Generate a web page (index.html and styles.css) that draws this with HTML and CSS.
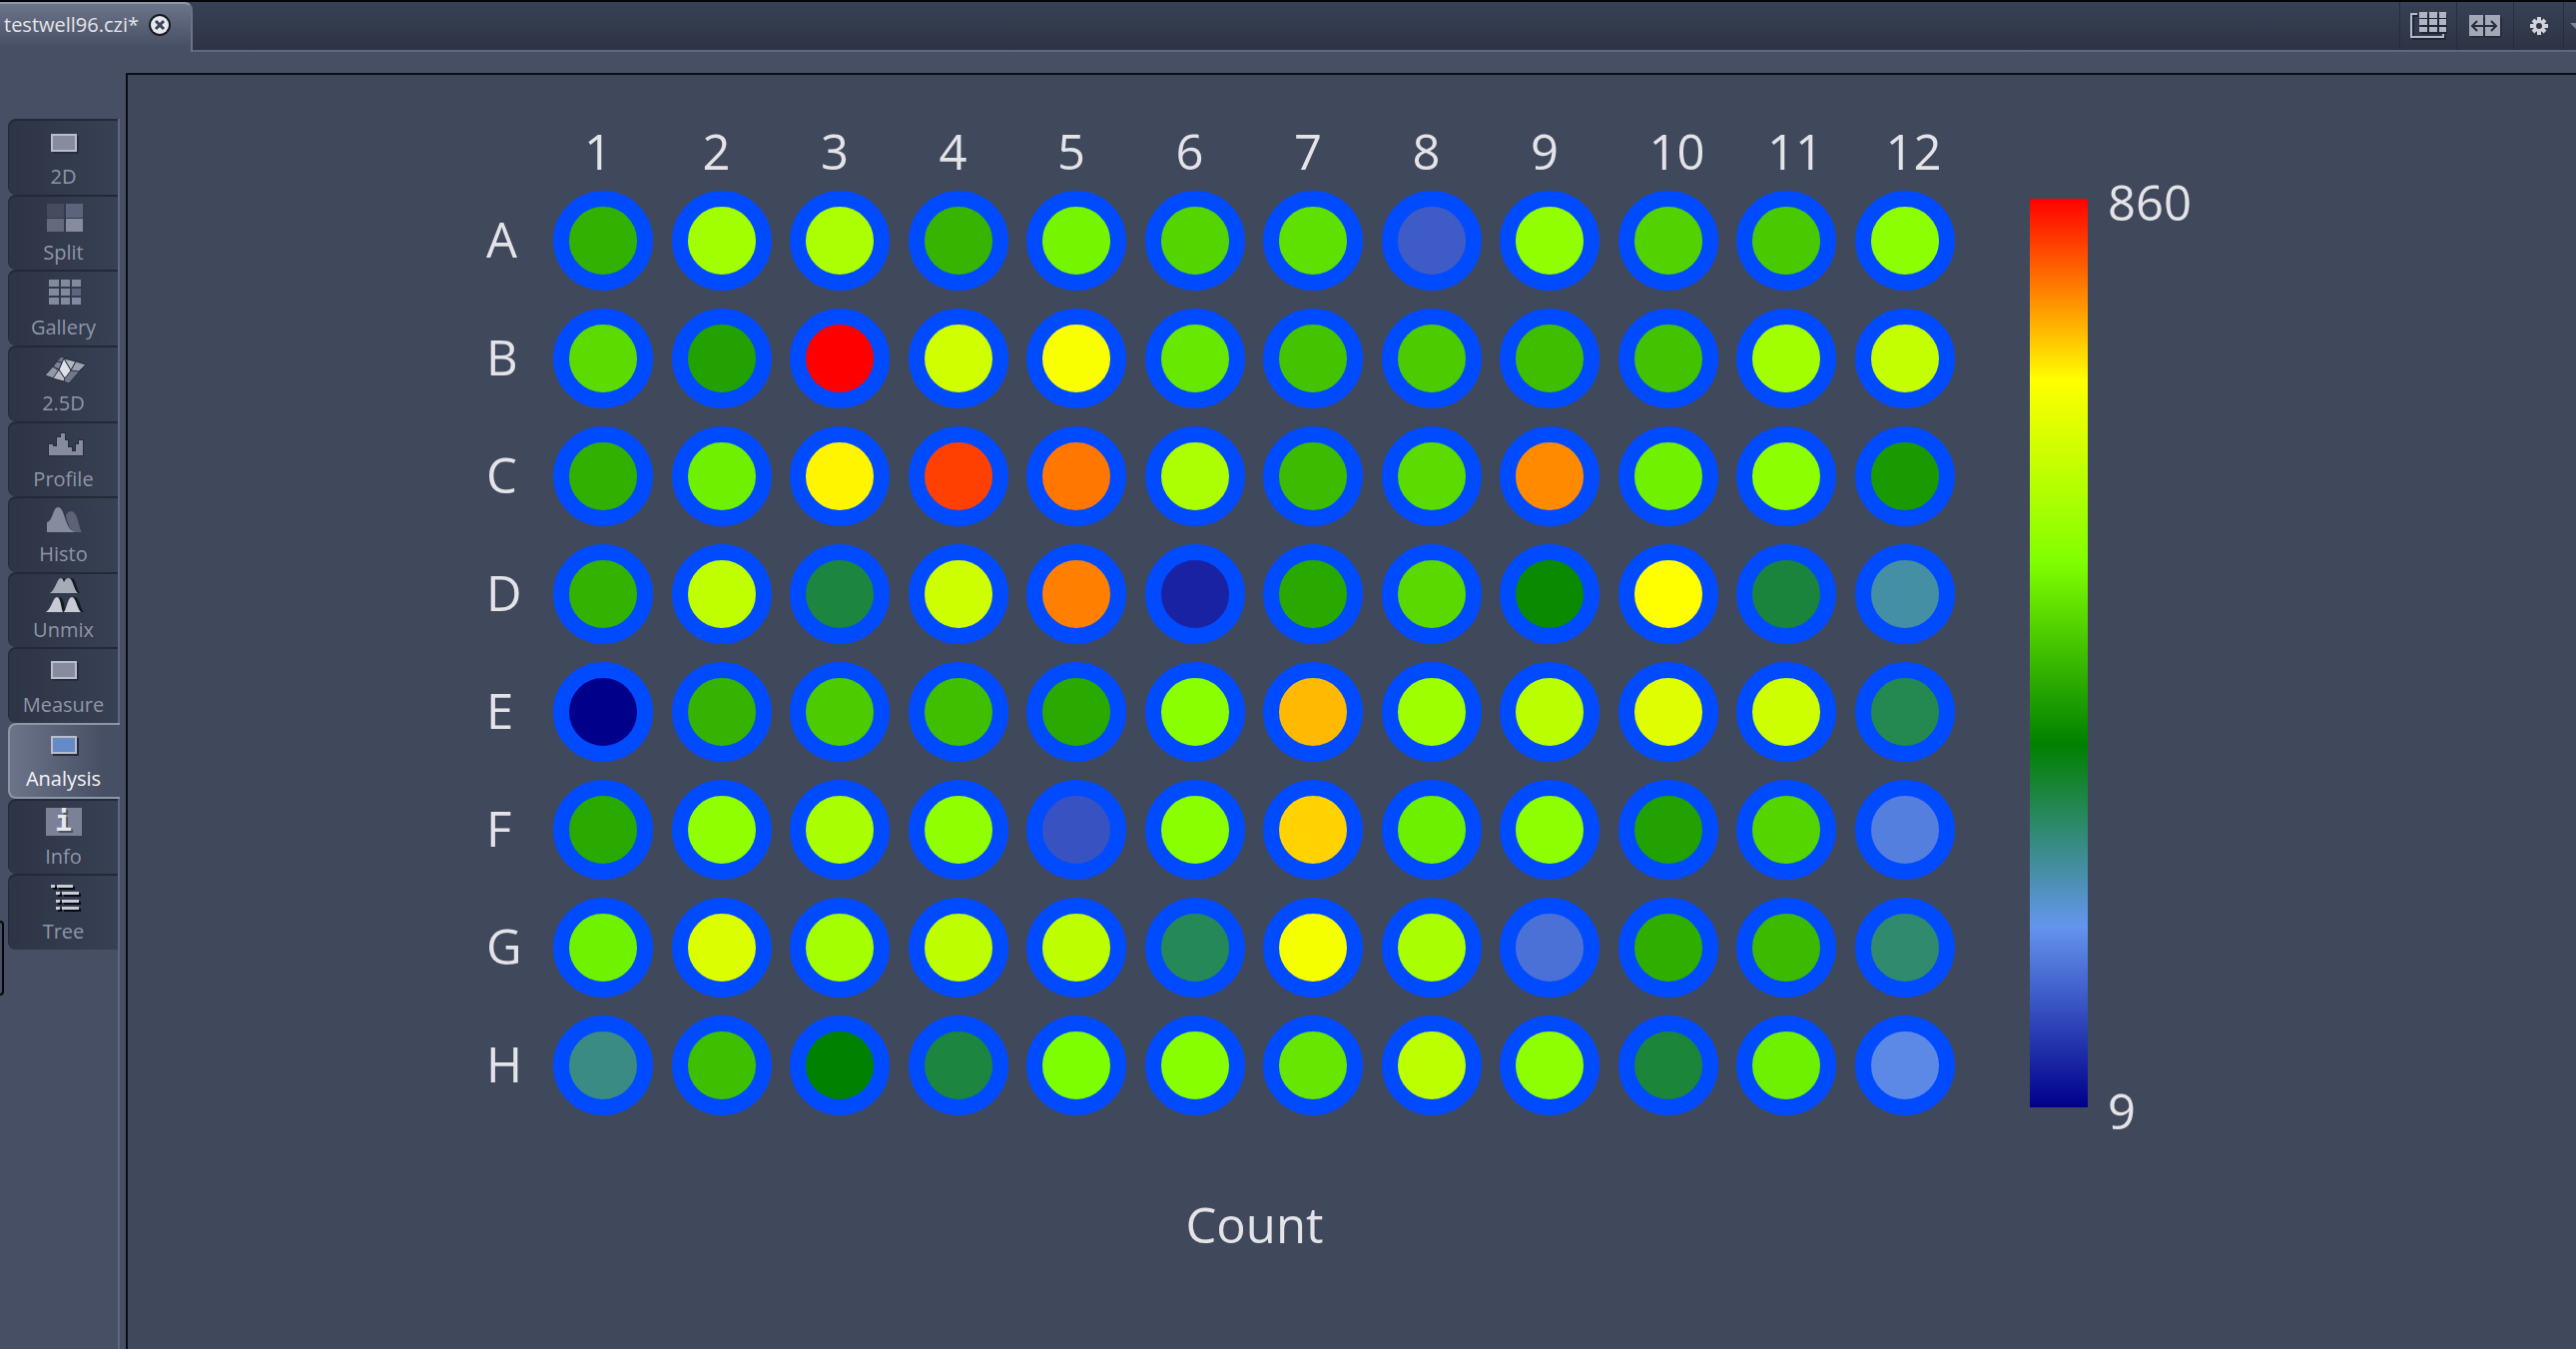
FILE: index.html
```html
<!DOCTYPE html>
<html lang="en">
<head>
<meta charset="utf-8">
<title>testwell96.czi</title>
<link rel="stylesheet" href="styles.css">
</head>
<body>
<header class="topbar">
  <div class="doc-tab">
    <span class="doc-name">testwell96.czi*</span>
    <button class="close" type="button" aria-label="Close document">
      <svg width="24" height="24" viewBox="0 0 24 24"><circle cx="12" cy="12" r="11" fill="#151a24"/><circle cx="12" cy="12" r="9" fill="#e6e8ee"/><path d="M8 8l8 8M16 8l-8 8" stroke="#3a4256" stroke-width="3"/></svg>
    </button>
  </div>
  <div class="tools">
    <button class="tool tool-wide" type="button" aria-label="Gallery layout">
      <svg width="38" height="30" viewBox="0 0 38 30">
        <path d="M9 5H4v23h32v-4" fill="none" stroke="#1f2635" stroke-width="2"/>
        <path d="M8 3H2v23h32v-3" fill="none" stroke="#b4b9c6" stroke-width="2"/>
        <path d="M12 3h26v20H12z" fill="#1f2635"/>
        <g fill="#b0b5c4"><path d="M10 1h8v6h-8zM20 1h8v6h-8zM30 1h7v6h-7zM10 8h8v6h-8zM20 8h8v6h-8zM30 8h7v6h-7zM10 16h8v5h-8zM20 16h8v5h-8zM30 16h7v5h-7z"/></g>
      </svg>
    </button>
    <button class="tool tool-wide" type="button" aria-label="Split layout">
      <svg width="34" height="24" viewBox="0 0 34 24">
        <path d="M3 3h31v21H3z" fill="#262d3c"/>
        <path d="M1 1h14v21H1zM17 1h15v21H17z" fill="#a3a8b7"/>
        <path d="M5 12h23M9 7l-5 5 5 5M23 7l5 5-5 5" fill="none" stroke="#262d3c" stroke-width="2"/>
      </svg>
    </button>
    <button class="tool tool-gear" type="button" aria-label="Settings">
      <svg width="20" height="20" viewBox="0 0 20 20">
        <path d="M10 1v18M1 10h18M4 4l12 12M16 4L4 16" stroke="#d0d3dc" stroke-width="4"/>
        <circle cx="10" cy="10" r="6" fill="#d0d3dc"/><circle cx="10" cy="10" r="3" fill="#2f3648"/>
      </svg>
    </button>
    <button class="tool tool-menu" type="button" aria-label="More">
      <svg width="12" height="6" viewBox="0 0 12 6"><path d="M0 0h12L6 6z" fill="#7c849a"/></svg>
    </button>
  </div>
</header>
<main class="workspace">
  <span class="handle"></span>
  <nav class="sidebar">
    <div class="views">
      <button class="view" type="button">
        <svg class="icon" viewBox="0 0 44 36"><path d="M11 12h26v18H11z" fill="#262d3c"/><path d="M10 11h24v16H10z" fill="#878b9e" stroke="#b9bdca" stroke-width="2"/></svg>
        <span>2D</span>
      </button>
      <button class="view" type="button">
        <svg class="icon" viewBox="0 0 44 36"><path d="M5 4h17v14H5z" fill="#454c5f"/><path d="M24 4h17v14H24z" fill="#5c647b"/><path d="M5 19h17v13H5z" fill="#646a7c"/><path d="M24 19h17v13H24z" fill="#868b9e"/></svg>
        <span>Split</span>
      </button>
      <button class="view" type="button">
        <svg class="icon" viewBox="0 0 44 36"><path d="M7 5h10v7H7zM19 5h9v7h-9zM30 5h9v7h-9zM7 14h10v7H7zM19 14h9v7h-9zM7 23h10v7H7zM19 23h9v7h-9zM30 23h9v7h-9z" fill="#828aa0"/><path d="M30 14h9v7h-9z" fill="#5e6480"/></svg>
        <span>Gallery</span>
      </button>
      <button class="view" type="button">
        <svg class="icon" viewBox="0 0 44 36">
          <g stroke="#262d3c" stroke-width="1">
            <path d="M19 6l25 8-17 19L3 25z" fill="#6f778b"/>
            <path d="M3 25l8-9 6 4-5 8z" fill="#9298a8"/>
            <path d="M22 8l12 3-5 9z" fill="#b4b8c4"/>
            <path d="M34 11l10 3-7 7-8-1z" fill="#9ca1b0"/>
            <path d="M11 28l6-9 6 9-1 3z" fill="#b9bdc9"/>
            <path d="M22 8l7 12-6 8-6-9z" fill="#dfe1e8"/>
            <path d="M11 16l4-5 5 1-3 7z" fill="#7b8397"/>
          </g>
        </svg>
        <span>2.5D</span>
      </button>
      <button class="view" type="button">
        <svg class="icon" viewBox="0 0 44 36"><path d="M7 29V18h4v2h4v-9h4V7h4v7h3v7h4v4h4v-7h3v-4h4v15z" fill="#868b9e" stroke="#262d3c" stroke-width="2" paint-order="stroke"/></svg>
        <span>Profile</span>
      </button>
      <button class="view" type="button">
        <svg class="icon" viewBox="0 0 44 36"><path d="M24 14c3-5 8-6 11 2s2 11 5 15h-8c-4-3-7-10-8-17z" fill="#5c6277"/><path d="M5 31V21c6-1 6-15 11-15s6 9 9 16c2 5 4 7 8 9z" fill="#868b9e"/></svg>
        <span>Histo</span>
      </button>
      <button class="view" type="button">
        <svg class="icon" viewBox="0 0 44 36">
          <path d="M11 16C17 12 17 1 21 1c2 0 3 2 4 4 1-2 2-4 5-4 4 0 5 12 8 15zM9 35c5-4 5-15 9-15s4 10 6 14c2-5 4-14 9-14s5 11 9 15z" fill="#151a24"/>
          <path d="M8 16C14 12 15 1 19 1c2 0 2 2 3 4 1-2 2-4 5-4 4 0 5 12 9 15z" fill="#a6abb8"/>
          <path d="M4 35c6-4 7-15 11-15s4 11 6 15zM22 35c3-4 4-15 8-15s5 11 9 15z" fill="#c8cbd5"/>
        </svg>
        <span>Unmix</span>
      </button>
      <button class="view" type="button">
        <svg class="icon" viewBox="0 0 44 36"><path d="M11 11h26v18H11z" fill="#262d3c"/><path d="M10 10h24v16H10z" fill="#878b9e" stroke="#b9bdca" stroke-width="2"/></svg>
        <span>Measure</span>
      </button>
      <button class="view active" type="button" aria-current="page">
        <svg class="icon" viewBox="0 0 44 36"><path d="M11 12h26v18H11z" fill="#262d3c"/><path d="M10 11h24v16H10z" fill="#648ac8" stroke="#b9bdca" stroke-width="2"/></svg>
        <span>Analysis</span>
      </button>
      <button class="view" type="button">
        <span class="info">i</span>
        <span>Info</span>
      </button>
      <button class="view" type="button">
        <svg class="icon" viewBox="0 0 44 36"><path d="M11 8h4v3h-4zM17 8h16v3H17zM16 15h4v3h-4zM22 15h17v3H22zM16 23h4v3h-4zM22 23h17v3H22zM16 30h4v3h-4zM22 30h17v3H22z" fill="#080a10"/><path d="M9 6h4v3H9zM15 6h16v3H15zM14 13h4v3h-4zM20 13h17v3H20zM14 21h4v3h-4zM20 21h17v3H20zM14 28h4v3h-4zM20 28h17v3H20z" fill="#c8cbd5"/></svg>
        <span>Tree</span>
      </button>
    </div>
  </nav>
  <section class="panel">
    <figure class="heatmap">
      <table class="plate">
        <thead>
          <tr><td class="corner"></td><th scope="col">1</th><th scope="col">2</th><th scope="col">3</th><th scope="col">4</th><th scope="col">5</th><th scope="col">6</th><th scope="col">7</th><th scope="col">8</th><th scope="col">9</th><th scope="col">10</th><th scope="col">11</th><th scope="col">12</th></tr>
        </thead>
        <tbody id="wells"></tbody>
      </table>
      <div class="legend">
        <div class="scale"></div>
        <div class="limits"><span>860</span><span>9</span></div>
      </div>
      <figcaption class="measure">Count</figcaption>
    </figure>
  </section>
</main>
<script src="plate.js"></script>
</body>
</html>
```
FILE: plate.js
```js
// Fill colour of each well, row by row.
const plate = {
  A: '33b100 a2ff00 abff00 37b400 75f500 54d500 5ee000 3f5bc6 92ff00 52d300 49ca00 8cff00',
  B: '5bdb00 22a100 ff0000 d0ff00 f9ff00 67e800 44c300 4bcb00 3fbe00 43c200 a2ff00 c3ff00',
  C: '32b000 6ef000 fff500 ff4000 ff7700 abff00 3cbb00 5bdb00 ff8a00 6ff100 8cff00 1b9a00',
  D: '34b200 c0ff00 1c853f ceff00 ff8000 1a22a4 29a800 59d900 098a00 ffff00 1b843c 448fa4',
  E: '00008b 35b300 4ccb00 3fbf00 2aa900 8aff00 ffb900 9eff00 baff00 dfff00 cdff00 248851',
  F: '2aa900 90ff00 a9ff00 90ff00 3852c2 8aff00 ffd200 6df000 8eff00 22a100 54d500 557fde',
  G: '6ff200 dcff00 a4ff00 bdff00 bdff00 258859 f5ff00 a9ff00 4b71d6 2fae00 3bba00 2f8a6e',
  H: '3a8b83 3ec000 008200 1c853f 7dff00 87ff00 66e600 bbff00 8dff00 1b8539 6ef100 5d89e6'
};

const body = document.getElementById('wells');
for (const [name, colours] of Object.entries(plate)) {
  const row = body.insertRow();
  const head = document.createElement('th');
  head.scope = 'row';
  head.textContent = name;
  row.append(head);
  for (const colour of colours.split(' ')) {
    const well = document.createElement('div');
    well.className = 'well';
    well.style.backgroundColor = '#' + colour;
    row.insertCell().append(well);
  }
}
```
FILE: styles.css
```css
* { box-sizing: border-box; }

body {
  margin: 0;
  min-height: 100vh;
  display: flex;
  flex-direction: column;
  overflow-x: hidden;
  background: #474f64;
  color: #e4e4e8;
  font-family: "Open Sans", "Noto Sans", sans-serif;
}

button {
  margin: 0;
  padding: 0;
  border: 0;
  background: none;
  color: inherit;
  font: inherit;
}

svg { display: block; }

/* Top bar */
.topbar {
  display: flex;
  justify-content: space-between;
  height: 52px;
  border-top: 2px solid #050609;
  background: linear-gradient(#384155, #2c3344);
  box-shadow: inset 0 -2px #5f6880;
}

.doc-tab {
  display: flex;
  align-items: center;
  gap: 9px;
  width: 193px;
  padding: 0 0 6px 4px;
  border-top: 2px solid #8f96a6;
  border-right: 2px solid #6b7389;
  border-radius: 0 8px 0 0;
  background: linear-gradient(#6c7489, #474f64 90%);
  font-size: 20px;
  line-height: 28px;
  white-space: nowrap;
}

.tools { display: flex; padding-bottom: 2px; }

.tool {
  display: flex;
  align-items: center;
  justify-content: center;
  border-left: 1px solid #262d3c;
}

.tool-wide { width: 57px; }
.tool-gear { width: 50px; }
.tool-menu { width: 13px; justify-content: flex-start; padding-left: 6px; overflow: hidden; }
.tool svg { flex: none; }

/* Side bar */
.workspace { flex: 1; display: flex; position: relative; }

.handle {
  position: absolute;
  left: 0;
  top: 870px;
  width: 4px;
  height: 75px;
  border: 2px solid #050609;
  border-left: 0;
  border-radius: 0 6px 6px 0;
}

.sidebar {
  width: 120px;
  margin-top: 67px;
  padding-left: 8px;
  border-right: 2px solid #5f6880;
}

.views { display: grid; grid-auto-rows: 1fr; height: 832px; }

.view {
  display: flex;
  flex-direction: column;
  align-items: center;
  gap: 3px;
  padding-top: 3px;
  border: 1px solid #222938;
  border-width: 2px 0 0 1px;
  border-radius: 8px 0 0 8px;
  background: linear-gradient(90deg, #2c3445, #384054);
  color: #9096a8;
  font-size: 20px;
  line-height: 28px;
}

.view.active {
  margin-right: -2px;
  padding: 1px 3px 0 0;
  border: 2px solid #8f96a6;
  border-right: 0;
  background: linear-gradient(90deg, #6c7489, #474f64 85%);
  color: #f4f4f6;
}

.icon { width: 44px; height: 36px; }

.info {
  width: 36px;
  height: 28px;
  margin: 4px 0;
  background: #7c8295;
  color: #e6e8ee;
  font: bold 28px/28px "DejaVu Sans Mono", monospace;
  text-shadow: 2px 2px #4a5164;
}

/* Plate view */
.panel {
  flex: 1;
  display: flex;
  justify-content: center;
  margin: 21px 0 0 6px;
  padding: 45px 26px 0 0;
  border: solid #0b0e15;
  border-width: 2px 0 0 2px;
  background: #40485c;
}

.heatmap {
  display: grid;
  grid-template-columns: auto auto;
  column-gap: 66px;
  align-content: start;
  margin: 0;
  font-size: 49px;
  line-height: 60px;
}

.plate {
  width: 1480px;
  table-layout: fixed;
  border-collapse: collapse;
}

.plate th { padding: 0; font-weight: 400; text-align: left; }
.plate td { padding: 0; }
.plate .corner { width: 58px; }
.plate thead th { height: 62px; padding-left: 40px; }
.plate tbody th { padding-bottom: 4px; }
.plate tbody tr { height: 118px; }

.well {
  width: 100px;
  height: 100px;
  margin: 0 auto;
  border: 16px solid #004bff;
  border-radius: 50%;
}

.legend { display: flex; gap: 20px; padding: 79px 0 17px; }

.scale {
  width: 58px;
  background: linear-gradient(#ff0000, #ffff00 20%, #80ff00 40%, #008000 60%, #6495ed 80%, #00008b);
}

.limits {
  display: flex;
  flex-direction: column;
  justify-content: space-between;
  margin: -27px 0 -33px;
}

.measure { padding: 70px 0 0 59px; text-align: center; }
```
